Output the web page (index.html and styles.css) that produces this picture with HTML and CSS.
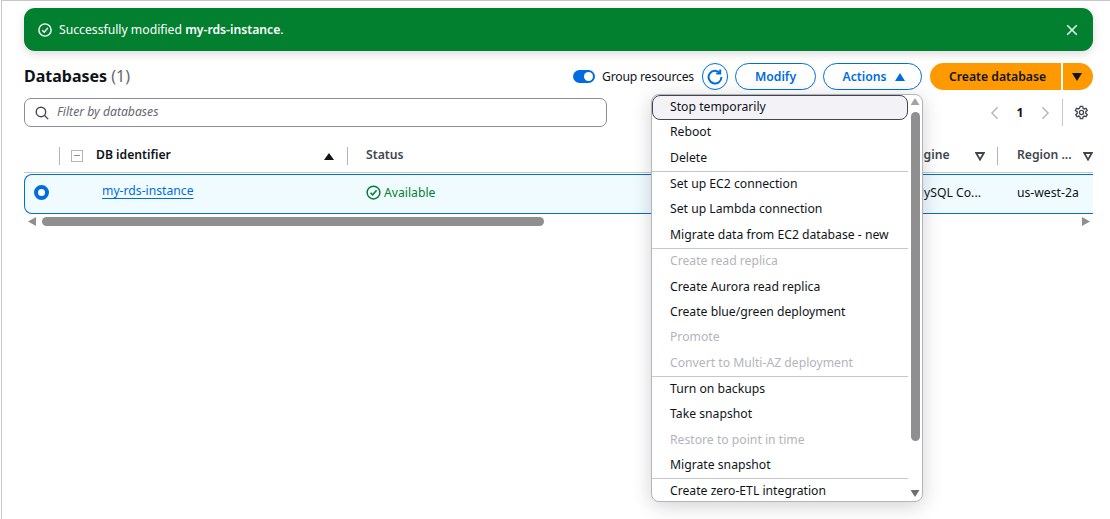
FILE: index.html
```html
<!DOCTYPE html>
<html lang="en">
<head>
    <meta charset="UTF-8">
    <title>Databases</title>
    <link rel="stylesheet" href="styles.css">
</head>
<body>
    <div class="page">
        <!-- Success banner -->
        <div class="flash">
            <svg class="flash-icon" viewBox="0 0 16 16"><circle cx="8" cy="8" r="7"/><path d="M4.800 8.200l2.300 2.300L11.300 5.600"/></svg>
            <span class="flash-text">Successfully modified <b>my-rds-instance</b>.</span>
            <svg class="flash-close" viewBox="0 0 16 16"><path d="M2.500 2.500l11 11M13.500 2.500l-11 11"/></svg>
        </div>

        <!-- Header -->
        <div class="header">
            <h1>Databases <span class="count">(1)</span></h1>
            <div class="header-actions">
                <span class="toggle"></span>
                <span class="toggle-label">Group resources</span>
                <button class="btn btn-icon">
                    <svg viewBox="0 0 16 16"><path d="M12.800 3.900A6.400 6.400 0 1 0 14.400 8"/><path d="M9.200 4.400h4V.6"/></svg>
                </button>
                <button class="btn btn-modify">Modify</button>
                <button class="btn btn-actions">Actions<span class="tri-up"></span></button>
                <div class="split">
                    <button class="btn-create">Create database</button>
                    <button class="btn-caret"><span class="tri-down"></span></button>
                </div>
            </div>
        </div>

        <!-- Filter and pagination -->
        <div class="tools">
            <div class="filter">
                <svg viewBox="0 0 16 16"><circle cx="6.800" cy="6.800" r="5.400"/><path d="M10.700 10.700l4.300 4.300"/></svg>
                <span>Filter by databases</span>
            </div>
            <div class="pager">
                <svg viewBox="0 0 16 16"><path d="M11 1.500L4.500 8l6.500 6.500"/></svg>
                <span class="page-num">1</span>
                <svg viewBox="0 0 16 16"><path d="M5 1.500L11.500 8 5 14.500"/></svg>
                <span class="pager-sep"></span>
                <svg class="gear" viewBox="0 0 16 16"><circle cx="8" cy="8" r="2.200"/><path d="M6.700 1.500h2.600l.4 2 1.200.7 1.900-.7 1.300 2.300-1.500 1.300v1.800l1.500 1.300-1.300 2.300-1.900-.7-1.200.7-.4 2H6.700l-.4-2-1.200-.7-1.900.7-1.300-2.300 1.500-1.300V7.100L1.400 5.800l1.300-2.300 1.900.7 1.200-.7z"/></svg>
            </div>
        </div>

        <!-- Table -->
        <div class="table-head">
            <div class="th th-select"></div>
            <div class="th th-id">
                <span class="check"></span>
                <span class="th-label">DB identifier</span>
                <span class="tri-sort"></span>
            </div>
            <div class="th th-status"><span class="th-label">Status</span></div>
            <div class="th th-engine">
                <span class="th-label">Engine</span>
                <svg class="tri-filter" viewBox="0 0 10 9"><path d="M1.200 1h7.600L5 7.600z"/></svg>
            </div>
            <div class="th th-region">
                <span class="th-label">Region ...</span>
                <svg class="tri-filter" viewBox="0 0 10 9"><path d="M1.200 1h7.600L5 7.600z"/></svg>
            </div>
        </div>
        <div class="table-row">
            <div class="td"><span class="radio"></span></div>
            <div class="td td-id"><a href="#">my-rds-instance</a></div>
            <div class="td td-status">
                <svg viewBox="0 0 16 16"><circle cx="8" cy="8" r="6.800"/><path d="M4.800 8.200l2.300 2.300L11.300 5.600"/></svg>
                Available
            </div>
            <div class="td td-engine">MySQL Co...</div>
            <div class="td td-region">us-west-2a</div>
        </div>
        <div class="hscroll">
            <span class="arrow-left"></span>
            <span class="hthumb"></span>
            <span class="arrow-right"></span>
        </div>

        <!-- Actions dropdown -->
        <div class="menu">
            <ul class="menu-list">
                <li class="item focused">Stop temporarily</li>
                <li class="item">Reboot</li>
                <li class="item">Delete</li>
                <li class="divider"></li>
                <li class="item">Set up EC2 connection</li>
                <li class="item">Set up Lambda connection</li>
                <li class="item">Migrate data from EC2 database - new</li>
                <li class="divider"></li>
                <li class="item off">Create read replica</li>
                <li class="item">Create Aurora read replica</li>
                <li class="item">Create blue/green deployment</li>
                <li class="item off">Promote</li>
                <li class="item off">Convert to Multi-AZ deployment</li>
                <li class="divider"></li>
                <li class="item">Turn on backups</li>
                <li class="item">Take snapshot</li>
                <li class="item off">Restore to point in time</li>
                <li class="item">Migrate snapshot</li>
                <li class="divider"></li>
                <li class="item">Create zero-ETL integration</li>
            </ul>
            <div class="vscroll">
                <span class="arrow-up"></span>
                <span class="vthumb"></span>
                <span class="arrow-down"></span>
            </div>
        </div>
    </div>
</body>
</html>
```

FILE: styles.css
```css
html, body {
    margin: 0;
    height: 100%;
    background: #fff;
    overflow: hidden;
}
body {
    font-family: "Noto Sans", Arial, sans-serif;
    font-size: 12.2px;
    color: #0f141a;
}
b {
    font-weight: 600;
}
.page {
    position: relative;
    box-sizing: border-box;
    height: 519px;
    margin-left: 1px;
    padding: 8px 17px 0 22px;
    border-top: 1px solid #c6c6cd;
    border-left: 1px solid #c6c6cd;
}
svg {
    fill: none;
    stroke: currentColor;
    stroke-width: 1.6;
}

/* banner */
.flash {
    display: flex;
    align-items: center;
    height: 43px;
    margin-top: -1px;
    padding: 0 14px;
    color: #fff;
    background: #037f30;
    border-radius: 11px;
    box-shadow: 0 3px 8px rgba(0, 7, 22, 0.14);
}
.flash-icon {
    width: 14px;
    height: 14px;
    margin-right: 7px;
}
.flash-text {
    flex: 1;
}
.flash-close {
    width: 14px;
    height: 14px;
    stroke-width: 1.8;
    color: #e6f4ea;
}

/* header */
.header {
    display: flex;
    align-items: center;
    justify-content: space-between;
    height: 27px;
    margin-top: 12px;
}
h1 {
    margin: 0 0 2px;
    font-size: 16px;
    font-weight: 700;
}
.count {
    font-weight: 400;
    color: #656871;
}
.header-actions {
    display: flex;
    align-items: center;
}
.toggle {
    position: relative;
    width: 22px;
    height: 13px;
    margin-right: 7px;
    background: #006ce0;
    border-radius: 7px;
}
.toggle::after {
    content: "";
    position: absolute;
    top: 2px;
    right: 2px;
    width: 9px;
    height: 9px;
    background: #fff;
    border-radius: 50%;
}
.toggle-label {
    width: 100px;
    letter-spacing: -0.2px;
    color: #0f141a;
}
.btn {
    box-sizing: border-box;
    height: 27px;
    padding: 0;
    font-family: inherit;
    font-size: 12.2px;
    font-weight: 600;
    color: #006ce0;
    background: #fff;
    border: 1px solid #006ce0;
    border-radius: 14px;
}
.btn-icon {
    display: flex;
    align-items: center;
    justify-content: center;
    width: 26px;
    margin-right: 7px;
}
.btn-icon svg {
    width: 16px;
    height: 16px;
    stroke-width: 2;
}
.btn-modify {
    width: 81px;
    margin-right: 7px;
}
.btn-actions {
    width: 99px;
    padding-left: 2px;
    margin-right: 8px;
}
.tri-up {
    display: inline-block;
    width: 0;
    margin-left: 8px;
    border: 5.500px solid transparent;
    border-top: 0;
    border-bottom: 8px solid #006ce0;
}
.split {
    display: flex;
    gap: 2px;
}
.btn-create, .btn-caret {
    height: 27px;
    padding: 0;
    font-family: inherit;
    font-size: 12.2px;
    font-weight: 600;
    color: #0f141a;
    background: #ff9900;
    border: none;
}
.btn-create {
    width: 131px;
    padding-left: 4px;
    border-radius: 14px 0 0 14px;
}
.btn-caret {
    width: 30px;
    padding-right: 3px;
    border-radius: 0 14px 14px 0;
}
.tri-down {
    display: inline-block;
    width: 0;
    border: 5px solid transparent;
    border-bottom: 0;
    border-top: 8px solid #0f141a;
}

/* filter row */
.tools {
    display: flex;
    align-items: center;
    justify-content: space-between;
    height: 29px;
    margin-top: 8px;
}
.filter {
    box-sizing: border-box;
    display: flex;
    align-items: center;
    gap: 8px;
    width: 583px;
    height: 29px;
    padding: 0 10px;
    font-style: italic;
    color: #656871;
    border: 1px solid #8c8c94;
    border-radius: 7px;
}
.filter span {
    margin-bottom: 2px;
}
.filter svg {
    width: 14px;
    height: 14px;
    color: #424650;
}
.pager {
    display: flex;
    align-items: center;
    color: #b4b4bb;
}
.pager svg {
    width: 14px;
    height: 14px;
}
.page-num {
    width: 36px;
    font-weight: 700;
    text-align: center;
    color: #0f141a;
}
.pager-sep {
    width: 1px;
    height: 27px;
    margin: 0 11px 0 10px;
    background: #c6c6cd;
}
.pager .gear {
    width: 15px;
    height: 15px;
    margin-right: 4px;
    stroke-width: 1.400;
    color: #424650;
}

/* table */
.table-head, .table-row {
    display: grid;
    grid-template-columns: 35px 288px 541px 109px 96px;
}
.table-head {
    height: 32px;
    margin-top: 13px;
    font-weight: 600;
    border-bottom: 1px solid #c6c6cd;
}
.th {
    display: flex;
    align-items: center;
    box-sizing: border-box;
    height: 18px;
    margin-top: 7px;
    padding-left: 18px;
    border-left: 1px solid #b4b4bb;
}
.th-label {
    margin-bottom: 3px;
    color: #424650;
}
.th-select {
    border-left: 0;
}
.th-id {
    padding-left: 11px;
    padding-right: 13px;
}
.th-id .th-label {
    flex: 1;
    color: #0f141a;
}
.check {
    box-sizing: border-box;
    position: relative;
    width: 12px;
    height: 12px;
    margin-right: 13px;
    border: 1px solid #b4b4bb;
}
.check::after {
    content: "";
    position: absolute;
    top: 4px;
    left: 2px;
    width: 6px;
    height: 1px;
    background: #8c8c94;
}
.tri-sort {
    width: 0;
    border: 5px solid transparent;
    border-top: 0;
    border-bottom: 7px solid #0f141a;
}
.tri-filter {
    width: 10px;
    height: 9px;
    margin-left: auto;
    margin-right: 1px;
    stroke-width: 1.800;
    color: #424650;
}
.th-engine {
    padding-left: 20px;
    padding-right: 11px;
}
.th-region {
    padding-left: 19px;
    padding-right: 0;
}
.th-region .tri-filter {
    margin-right: 0;
}
.table-row {
    box-sizing: border-box;
    height: 40px;
    margin-top: 1px;
    background: #f0fbff;
    border: 1px solid #006ce0;
    border-right: 0;
    border-radius: 8px 0 0 8px;
}
.td {
    display: flex;
    align-items: center;
    padding-bottom: 3px;
    padding-left: 18px;
    white-space: nowrap;
}
.table-row .td:first-child {
    padding-left: 9px;
    padding-bottom: 3px;
}
.radio {
    box-sizing: border-box;
    width: 15px;
    height: 15px;
    background: #fff;
    border: 4.500px solid #006ce0;
    border-radius: 50%;
}
.td-id {
    padding-left: 42px;
    padding-bottom: 7px;
}
.td-id a {
    color: #006ce0;
    text-decoration: underline;
    text-underline-offset: 3px;
}
.td-status {
    gap: 3px;
    color: #037f30;
}
.td-status svg {
    width: 15px;
    height: 15px;
}
.td-engine {
    padding-left: 24px;
}
.td-region {
    padding-left: 19px;
}
.hscroll {
    display: flex;
    align-items: center;
    height: 9px;
    margin-top: 3px;
    padding-left: 4px;
}
.arrow-left {
    width: 8px;
    height: 9px;
    background: #8f8f8f;
    clip-path: polygon(100% 0, 100% 100%, 0 50%);
}
.hthumb {
    width: 502px;
    height: 9px;
    margin-left: 6px;
    background: #8f8f8f;
    border-radius: 5px;
}
.arrow-right {
    width: 8px;
    height: 9px;
    margin-left: 538px;
    background: #8f8f8f;
    clip-path: polygon(0 0, 100% 50%, 0 100%);
}

/* dropdown */
.menu {
    position: absolute;
    top: 93px;
    left: 649px;
    box-sizing: border-box;
    display: flex;
    width: 272px;
    height: 408px;
    overflow: hidden;
    background: #fff;
    border: 1px solid #b4b4bb;
    border-radius: 8px;
    box-shadow: 0 4px 20px rgba(0, 7, 22, 0.18);
}
.menu-list {
    flex: 1;
    margin: 0;
    padding: 0;
    list-style: none;
}
.item {
    box-sizing: border-box;
    height: 25.360px;
    padding-left: 18px;
    line-height: 23px;
    white-space: nowrap;
}
.focused {
    background: #f3f3f7;
    border: 1px solid #424650;
    border-radius: 8px;
    padding-left: 17px;
    line-height: 21.500px;
}
.off {
    color: #b4b4bb;
}
.divider {
    height: 1px;
    background: #c6c6cd;
}
.vscroll {
    display: flex;
    flex-direction: column;
    align-items: center;
    width: 14px;
    padding-top: 3px;
}
.arrow-up, .arrow-down {
    width: 9px;
    height: 7px;
    background: #a3a3a3;
}
.arrow-up {
    clip-path: polygon(50% 0, 100% 100%, 0 100%);
}
.arrow-down {
    margin-top: 49px;
    background: #6f6f6f;
    clip-path: polygon(0 0, 100% 0, 50% 100%);
}
.vthumb {
    width: 9px;
    height: 329px;
    margin-top: 7px;
    background: #8f8f8f;
    border-radius: 5px;
}
```
